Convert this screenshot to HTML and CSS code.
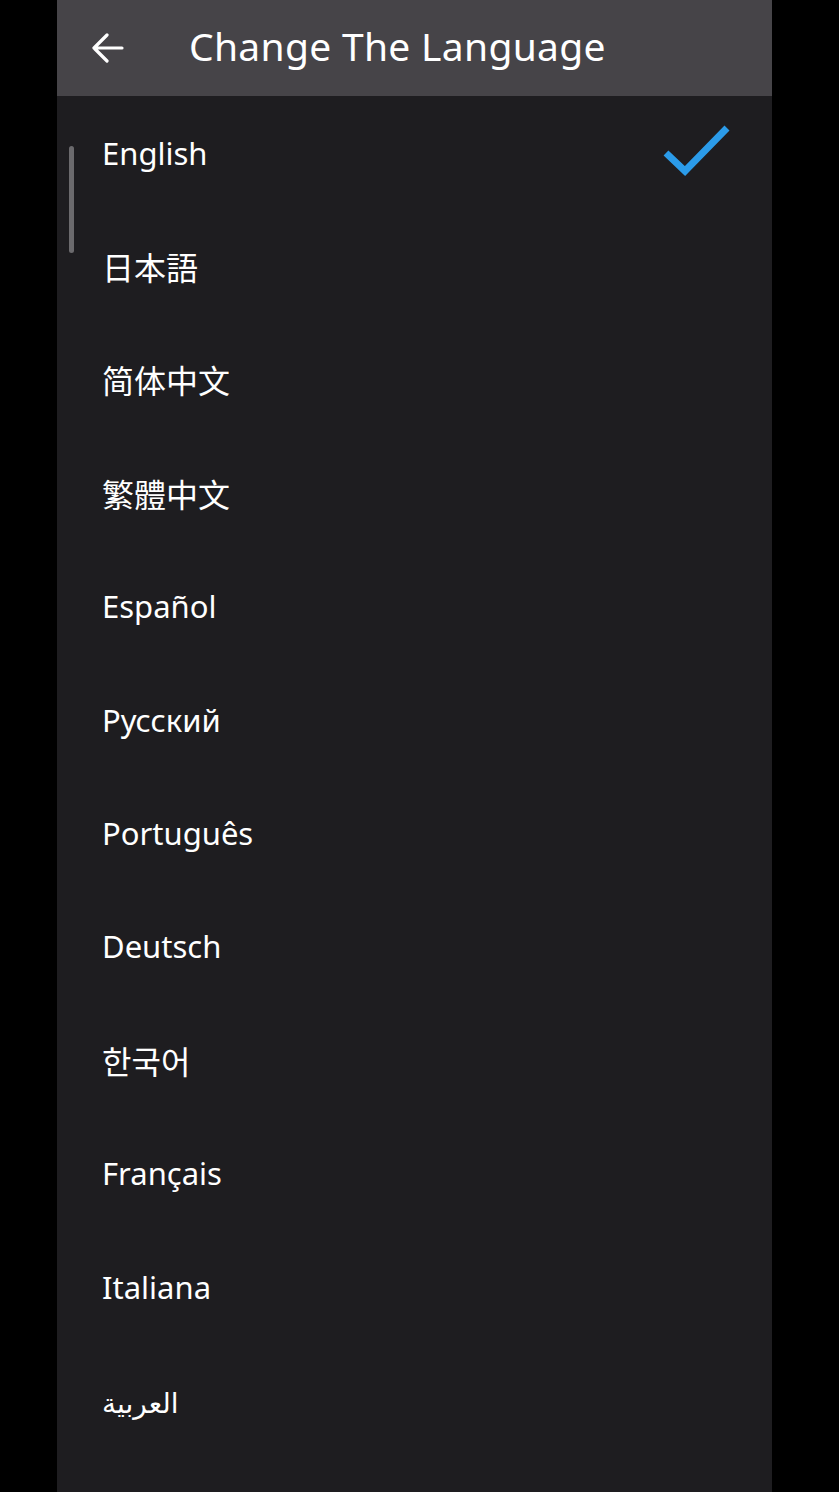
FILE: index.html
```html
<!DOCTYPE html>
<html lang="en">
    <head>
        <meta charset="UTF-8" />
        <meta name="viewport" content="width=device-width, initial-scale=1.0" />
        <title>Change The Language</title>
        <link rel="stylesheet" href="styles.css">
    </head>
    <body>
        <div class="screen">
            <header class="top-bar">
                <button class="btn-back" type="button" aria-label="Back">
                    <svg width="32" height="30" viewBox="0 0 32 30">
                        <path d="M2 15 H30 M15 2 L2 15 L15 28" fill="none" stroke="#ffffff" stroke-width="3.2" stroke-linecap="round" stroke-linejoin="round" />
                    </svg>
                </button>
                <h1>Change The Language</h1>
            </header>
            <div class="lang-list">
                <div class="scroll-thumb"></div>
                <div class="lang-item selected">
                    <span>English</span>
                    <svg class="check" width="70" height="52" viewBox="0 0 70 52">
                        <path d="M4 29 L23 47 L65 4" fill="none" stroke="#2b9be9" stroke-width="7" />
                    </svg>
                </div>
                <div class="lang-item"><span lang="ja">日本語</span></div>
                <div class="lang-item"><span lang="zh-CN">简体中文</span></div>
                <div class="lang-item"><span lang="zh-TW">繁體中文</span></div>
                <div class="lang-item"><span>Español</span></div>
                <div class="lang-item"><span>Русский</span></div>
                <div class="lang-item"><span>Português</span></div>
                <div class="lang-item"><span>Deutsch</span></div>
                <div class="lang-item"><span lang="ko">한국어</span></div>
                <div class="lang-item"><span>Français</span></div>
                <div class="lang-item"><span>Italiana</span></div>
                <div class="lang-item"><span lang="ar" dir="rtl" class="arabic">العربية</span></div>
            </div>
        </div>
    </body>
</html>
```

FILE: styles.css
```css
* {
    padding: 0;
    margin: 0;
    box-sizing: border-box;
}
html,
body {
    height: 100%;
    overflow: hidden;
}
body {
    background-color: #000000;
    font-family: 'Noto Sans', 'Noto Sans CJK JP', sans-serif;
    color: #ffffff;
}
.screen {
    margin-left: 57px;
    width: 715px;
    height: 100%;
    background-color: #1e1d20;
    display: flex;
    flex-direction: column;
}
.top-bar {
    height: 96px;
    flex-shrink: 0;
    background-color: #464448;
    display: flex;
    align-items: center;
    padding-left: 35px;
}
.btn-back {
    background: none;
    border: none;
    display: flex;
    align-items: center;
    width: 97px;
    height: 40px;
    cursor: pointer;
}
.top-bar h1 {
    font-size: 39px;
    font-weight: 400;
    letter-spacing: 0.3px;
    margin-top: -5px;
}
.lang-list {
    position: relative;
    flex: 1;
    display: flex;
    flex-direction: column;
}
.scroll-thumb {
    position: absolute;
    left: 12px;
    top: 50px;
    width: 5px;
    height: 107px;
    border-radius: 3px;
    background-color: #6b6a6d;
}
.lang-item {
    height: 113.4px;
    flex-shrink: 0;
    display: flex;
    align-items: center;
    justify-content: space-between;
    padding-left: 45px;
    padding-right: 40px;
    font-size: 31px;
    cursor: pointer;
}
.lang-item span[lang='ja'] {
    font-family: 'Noto Sans CJK JP', sans-serif;
    font-size: 32px;
}
.lang-item span[lang='zh-CN'] {
    font-family: 'Noto Sans CJK SC', sans-serif;
    font-size: 32px;
}
.lang-item span[lang='zh-TW'] {
    font-family: 'Noto Sans CJK TC', sans-serif;
    font-size: 32px;
}
.lang-item span[lang='ko'] {
    font-family: 'Noto Sans CJK KR', sans-serif;
    font-size: 32px;
}
.arabic {
    font-family: 'DejaVu Sans', sans-serif;
    font-size: 28px;
    margin-top: 8px;
}
.check {
    margin-top: -6px;
}
```
